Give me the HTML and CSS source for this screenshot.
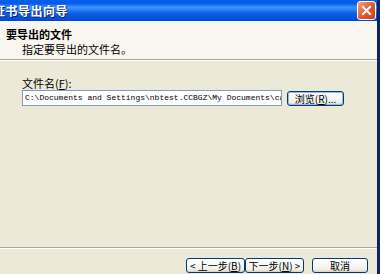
FILE: index.html
```html
<!DOCTYPE html>
<html lang="zh-CN">
<head>
  <meta charset="UTF-8" />
  <title>证书导出向导</title>
  <link rel="stylesheet" href="styles.css">
</head>
<body>
  <div class="window">
    <div class="titlebar">
      <span class="title">证书导出向导</span>
      <span class="close">
        <svg width="17" height="17" viewBox="0 0 17 17">
          <path d="M5 5 L12 12 M12 5 L5 12" stroke="#fff" stroke-width="2" stroke-linecap="square" />
        </svg>
      </span>
    </div>

    <div class="header">
      <div class="header-title">要导出的文件</div>
      <div class="header-sub">指定要导出的文件名。</div>
    </div>

    <div class="content">
      <div class="label">文件名(<u>F</u>):</div>
      <div class="file-row">
        <div class="file-input">C:\Documents and Settings\nbtest.CCBGZ\My Documents\ca</div>
        <button class="btn btn-focus">浏览(<u>R</u>)...</button>
      </div>
    </div>

    <div class="footer">
      <button class="btn btn-nav">&lt; 上一步(<u>B</u>)</button>
      <button class="btn btn-nav">下一步(<u>N</u>) &gt;</button>
      <button class="btn btn-cancel">取消</button>
    </div>
  </div>
</body>
</html>
```

FILE: styles.css
```css
body {
  margin: 0;
  width: 380px;
  height: 274px;
  overflow: hidden;
  font-family: "Noto Sans CJK SC", "Liberation Sans", sans-serif;
  font-size: 11px;
  color: #000;
}

.window {
  width: 377px;
  height: 274px;
  display: flex;
  flex-direction: column;
  background: #ece9d8;
  border-right: 3px solid #0a246a;
}

.titlebar {
  height: 21px;
  display: flex;
  align-items: center;
  justify-content: space-between;
  background: linear-gradient(180deg, #0a5fe0 0%, #0058ee 15%, #3d95ff 35%, #0a5fe0 65%, #0048d8 100%);
  overflow: hidden;
}

.title {
  margin-left: -7px;
  color: #fff;
  font-weight: bold;
  font-size: 12px;
  letter-spacing: 0.5px;
  text-shadow: 1px 1px 0 #0a1e6e;
}

.close {
  width: 17px;
  height: 17px;
  margin-right: 1px;
  display: flex;
  background: linear-gradient(135deg, #f4a27e, #e45a34 50%, #cc3e14);
  border: 1px solid #fff;
  border-radius: 3px;
}

.header {
  height: 35px;
  padding: 3px 0 0 6px;
  background: #f8f6ef;
  border-bottom: 1px solid #aca899;
  box-shadow: 0 1px 0 #fff;
}

.header-title {
  font-weight: bold;
  font-size: 11px;
  line-height: 15px;
  margin-top: 3px;
}

.header-sub {
  padding-left: 16px;
  line-height: 14px;
}

.content {
  flex: 1;
  padding: 16px 0 0 22px;
}

.label {
  line-height: 14px;
}

.file-row {
  display: flex;
  align-items: center;
  gap: 5px;
  margin-top: 0;
}

.file-input {
  width: 254px;
  height: 14px;
  padding: 0 2px;
  background: #fff;
  border: 1px solid #7f9db9;
  font-family: "Liberation Mono", monospace;
  font-size: 8px;
  line-height: 14px;
  white-space: nowrap;
  overflow: hidden;
}

.btn {
  font-family: "Noto Sans CJK SC", "Liberation Sans", sans-serif;
  font-size: 10px;
  height: 15px;
  padding: 0;
  line-height: 13px;
  background: linear-gradient(180deg, #fff, #f0f0ea 80%, #d6d0c5);
  border: 1px solid #003c74;
  border-radius: 3px;
  color: #000;
}

.btn-focus {
  width: 57px;
  box-shadow: inset 0 0 0 1px #98b8ea;
}

.footer {
  height: 25px;
  display: flex;
  align-items: flex-end;
  padding: 0 0 1px 186px;
  border-top: 1px solid #aca899;
  box-shadow: inset 0 1px 0 #fff;
}

.btn-nav {
  width: 59px;
}

.btn-cancel {
  width: 56px;
  margin-left: 8px;
}
```
